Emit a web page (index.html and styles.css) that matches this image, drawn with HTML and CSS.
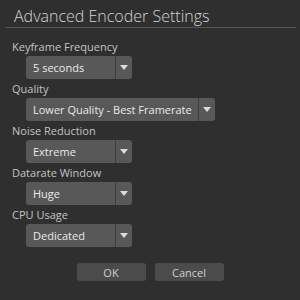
FILE: index.html
```html
<!DOCTYPE html>
<html lang="en">
<head>
  <meta charset="UTF-8">
  <title>Advanced Encoder Settings</title>
  <link rel="stylesheet" href="styles.css">
</head>
<body>

<div class="dialog">
  <h1 class="title">Advanced Encoder Settings</h1>

  <div class="fields">
    <div class="field">
      <label>Keyframe Frequency</label>
      <div class="select">
        <span class="value">5 seconds</span>
        <span class="arrow"></span>
      </div>
    </div>
    <div class="field">
      <label>Quality</label>
      <div class="select wide">
        <span class="value">Lower Quality - Best Framerate</span>
        <span class="arrow"></span>
      </div>
    </div>
    <div class="field">
      <label>Noise Reduction</label>
      <div class="select">
        <span class="value">Extreme</span>
        <span class="arrow"></span>
      </div>
    </div>
    <div class="field">
      <label>Datarate Window</label>
      <div class="select">
        <span class="value">Huge</span>
        <span class="arrow"></span>
      </div>
    </div>
    <div class="field">
      <label>CPU Usage</label>
      <div class="select">
        <span class="value">Dedicated</span>
        <span class="arrow"></span>
      </div>
    </div>
  </div>

  <!-- Dialog buttons -->
  <div class="buttons">
    <button class="btn">OK</button>
    <button class="btn">Cancel</button>
  </div>
</div>

</body>
</html>
```

FILE: styles.css
```css
* {
  margin: 0;
  padding: 0;
  box-sizing: border-box;
}

body {
  font-family: "Open Sans", "Noto Sans", sans-serif;
  background-color: #2f2f2f;
  color: #c8c8c8;
  width: 300px;
  height: 300px;
  overflow: hidden;
}

.dialog {
  display: flex;
  flex-direction: column;
}

.title {
  margin: 0 4px 0 5px;
  padding-left: 9px;
  height: 28px;
  line-height: 32px;
  font-size: 16px;
  font-weight: 300;
  color: #d4d4d4;
  border-bottom: 1px solid #555;
}

.fields {
  padding-left: 12px;
  margin-top: 9px;
}

.field label {
  display: block;
  height: 19px;
  line-height: 19px;
  font-size: 11px;
  color: #c4c4c4;
}

.select {
  margin-left: 14px;
  width: 106px;
  height: 23px;
  display: flex;
  background-color: #585858;
  border-radius: 3px;
  color: #eaeaea;
  font-size: 11px;
}

.select.wide {
  width: 189px;
}

.select .value {
  flex: 1;
  padding-left: 7px;
  line-height: 23px;
}

.select .arrow {
  width: 17px;
  border-left: 1px solid #3e3e3e;
  display: flex;
  justify-content: center;
  align-items: center;
}

.select .arrow::after {
  content: "";
  border-left: 4px solid transparent;
  border-right: 4px solid transparent;
  border-top: 5px solid #dcdcdc;
}

.buttons {
  display: flex;
  justify-content: center;
  gap: 9px;
  margin-top: 16px;
}

.btn {
  width: 69px;
  height: 18px;
  background-color: #4b4b4b;
  border: none;
  border-radius: 3px;
  color: #d0d0d0;
  font-family: "Open Sans", "Noto Sans", sans-serif;
  font-size: 11px;
}
```
